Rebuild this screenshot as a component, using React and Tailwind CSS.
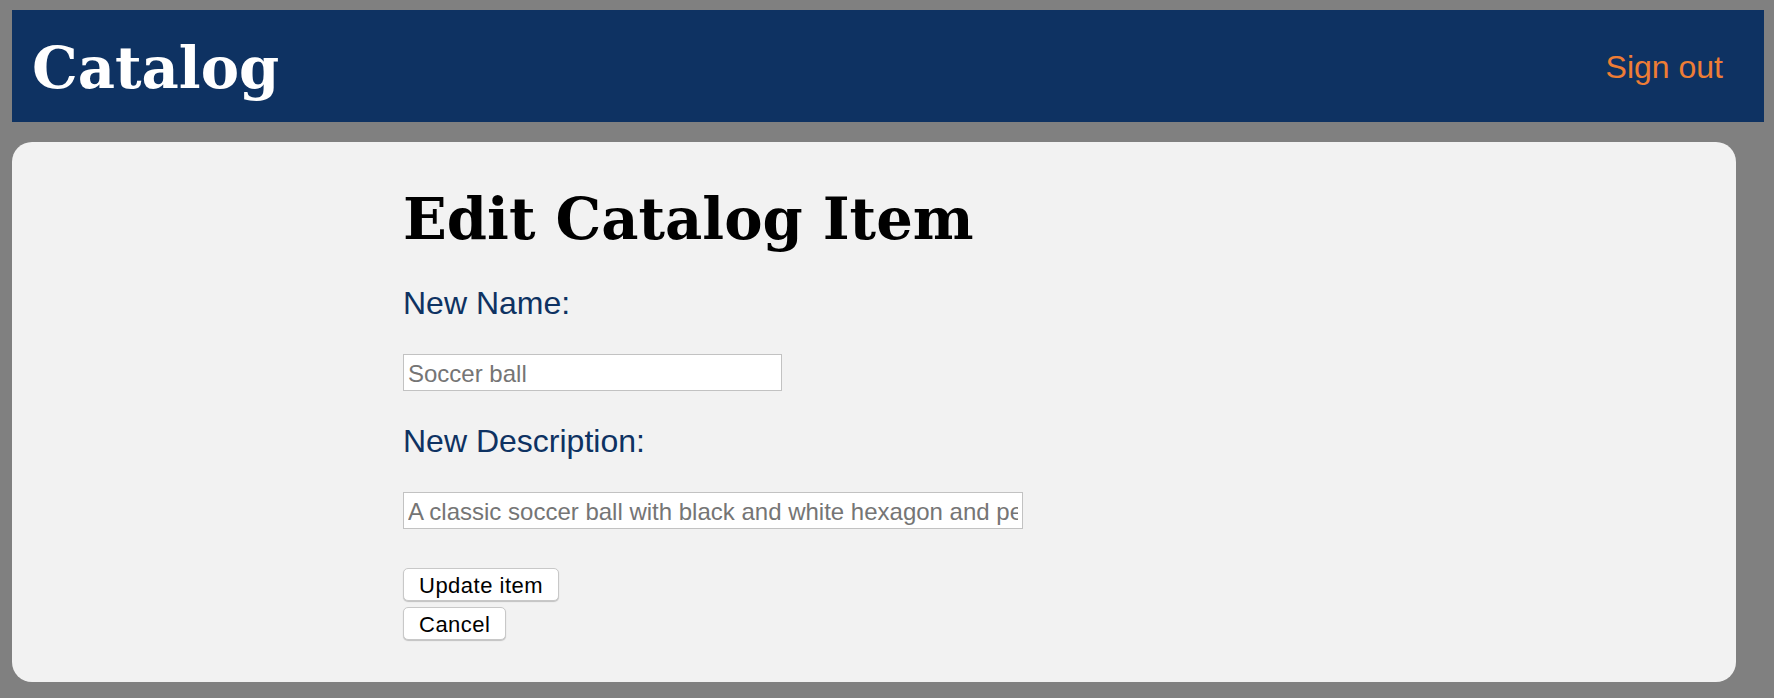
export default function App() {
  return (
    <div className="min-h-[698px] bg-[#808080] pt-[10px] pl-[12px] pr-[10px] pb-[16px]">
      <header className="flex h-[112px] items-start justify-between bg-[#0e3262]">
        <div
          className="pt-[30px] pl-[20px] text-[57.5px] font-bold leading-[57px] text-white"
          style={{ fontFamily: '"DejaVu Serif", Georgia, serif' }}
        >
          Catalog
        </div>
        <a
          href="#"
          className="mt-[41px] mr-[41px] text-[32px] leading-[32px] text-[#ee7d35]"
          style={{ fontFamily: '"Liberation Sans", Arial, sans-serif' }}
        >
          Sign out
        </a>
      </header>
      <main className="mt-[20px] mr-[28px] h-[540px] rounded-[20px] bg-[#f2f2f2] pt-[49px] pl-[391px]">
        <h1
          className="text-[57.5px] font-bold leading-[57px] text-black"
          style={{ fontFamily: '"DejaVu Serif", Georgia, serif' }}
        >
          Edit Catalog Item
        </h1>
        <form
          className="flex flex-col items-start"
          style={{ fontFamily: '"Liberation Sans", Arial, sans-serif' }}
        >
          <label className="mt-[37px] text-[32px] leading-[36px] text-[#0e3262]">New Name:</label>
          <input
            type="text"
            defaultValue="Soccer ball"
            className="mt-[33px] box-border h-[37px] w-[379px] border border-[#c2c2c2] bg-white px-[4px] pt-[2px] text-[24px] text-[#757575] outline-none"
          />
          <label className="mt-[32px] text-[32px] leading-[36px] text-[#0e3262]">New Description:</label>
          <input
            type="text"
            defaultValue="A classic soccer ball with black and white hexagon and pentagon patches."
            className="mt-[33px] box-border h-[37px] w-[620px] border border-[#c2c2c2] bg-white px-[4px] pt-[2px] text-[24px] text-[#757575] outline-none"
          />
          <button
            type="button"
            className="mt-[39px] box-border h-[33px] rounded-[5px] border border-[#c8c8c8] bg-white px-[15px] pt-[2px] text-[22px] leading-[28px] tracking-[0.5px] text-black shadow-[0_1px_1px_rgba(0,0,0,0.2)]"
          >
            Update item
          </button>
          <button
            type="button"
            className="mt-[6px] box-border h-[33px] rounded-[5px] border border-[#c8c8c8] bg-white px-[15px] pt-[2px] text-[22px] leading-[28px] tracking-[0.5px] text-black shadow-[0_1px_1px_rgba(0,0,0,0.2)]"
          >
            Cancel
          </button>
        </form>
      </main>
    </div>
  );
}
